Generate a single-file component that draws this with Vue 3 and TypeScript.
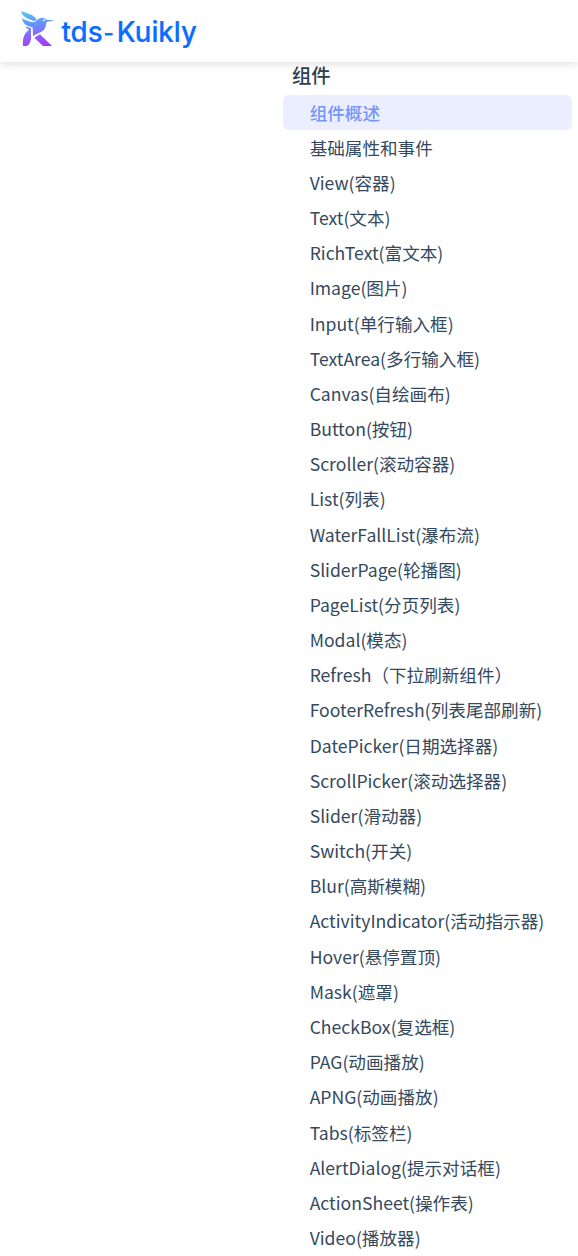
<script setup lang="ts">
const items: string[] = [
  '组件概述', '基础属性和事件', 'View(容器)', 'Text(文本)', 'RichText(富文本)',
  'Image(图片)', 'Input(单行输入框)', 'TextArea(多行输入框)', 'Canvas(自绘画布)',
  'Button(按钮)', 'Scroller(滚动容器)', 'List(列表)', 'WaterFallList(瀑布流)',
  'SliderPage(轮播图)', 'PageList(分页列表)', 'Modal(模态)', 'Refresh（下拉刷新组件）',
  'FooterRefresh(列表尾部刷新)', 'DatePicker(日期选择器)', 'ScrollPicker(滚动选择器)',
  'Slider(滑动器)', 'Switch(开关)', 'Blur(高斯模糊)', 'ActivityIndicator(活动指示器)',
  'Hover(悬停置顶)', 'Mask(遮罩)', 'CheckBox(复选框)', 'PAG(动画播放)', 'APNG(动画播放)',
  'Tabs(标签栏)', 'AlertDialog(提示对话框)', 'ActionSheet(操作表)', 'Video(播放器)',
]
const active = 0
</script>

<template>
  <div class="page">
    <header class="navbar">
      <svg class="logo" width="200" height="60" viewBox="0 0 200 60" role="img" aria-label="tds-Kuikly">
        <defs>
          <linearGradient id="bird" gradientUnits="userSpaceOnUse" x1="60" y1="33" x2="76" y2="138">
            <stop offset="0" stop-color="#55c5fb" />
            <stop offset="0.32" stop-color="#5d9dff" />
            <stop offset="0.62" stop-color="#8070ff" />
            <stop offset="1" stop-color="#ad39fa" />
          </linearGradient>
        </defs>
        <g transform="translate(10 0) scale(.33333)" fill="url(#bird)">
          <path d="M33 34C46 38 66 43 76 53Q80 57 80 61L71 63C57 57 38 53 33 34Z" />
          <path fill-rule="evenodd" d="M36 55C47 62 59 65 69 67C78 67 82 57 92 54Q103 51 109 59Q122 60 134 61L111 65C107 69 109 78 104 86C96 99 78 99 69 109L68 82L62 80C49 79 38 70 36 55ZM99 61a3 3 0 1 0 6 0a3 3 0 1 0-6 0Z" />
          <path d="M46 79Q54 83 63 84V116Q60 134 50 138H39C38 119 39 102 57 89Q49 86 46 79Z" />
          <path d="M73 113Q81 109 90 103L126 138H99Z" />
        </g>
        <g class="wordmark">
          <text x="61.4" y="41.5" textLength="41.3" lengthAdjust="spacingAndGlyphs">tds</text>
          <rect x="105" y="33.1" width="7.6" height="2.2" />
          <text x="116.8" y="41.5" textLength="80" lengthAdjust="spacingAndGlyphs">Kuikly</text>
        </g>
      </svg>
    </header>
    <aside class="sidebar">
      <p class="heading">组件</p>
      <ul class="links">
        <li v-for="(item, i) in items" :key="item" class="link" :class="{ active: i === active }">{{ item }}</li>
      </ul>
    </aside>
  </div>
</template>

<style>
body {
  margin: 0;
  background: #fff;
}
</style>

<style scoped>
.page {
  height: 1256px;
  overflow: hidden;
  background: #fff;
  color: #2c3e50;
  font-family: "Noto Sans CJK SC", sans-serif;
}
.navbar {
  position: relative;
  z-index: 1;
  height: 62px;
  background: #fff;
  box-shadow: 0 2px 8px rgba(0, 0, 0, 0.13);
}
.logo {
  display: block;
}
.wordmark {
  fill: #0b6cff;
  stroke: #0b6cff;
  stroke-width: 0.2px;
  font-family: Inter, sans-serif;
  font-size: 28px;
  font-weight: 500;
}
.sidebar {
  margin-left: 283px;
  width: 289px;
}
.heading {
  height: 32.53px;
  margin: 0;
  padding-left: 9px;
  font-size: 19.36px;
  line-height: 27px;
  font-weight: 500;
}
.links {
  margin: 0;
  padding: 0;
  list-style: none;
}
.link {
  height: 35.172px;
  box-sizing: border-box;
  padding-left: 26.65px;
  border-radius: 6px;
  color: #34495e;
  font-size: 17.6px;
  line-height: 35.172px;
  white-space: nowrap;
}
.active {
  background: #ebeefe;
  color: #7495fa;
  font-weight: 500;
}
</style>
